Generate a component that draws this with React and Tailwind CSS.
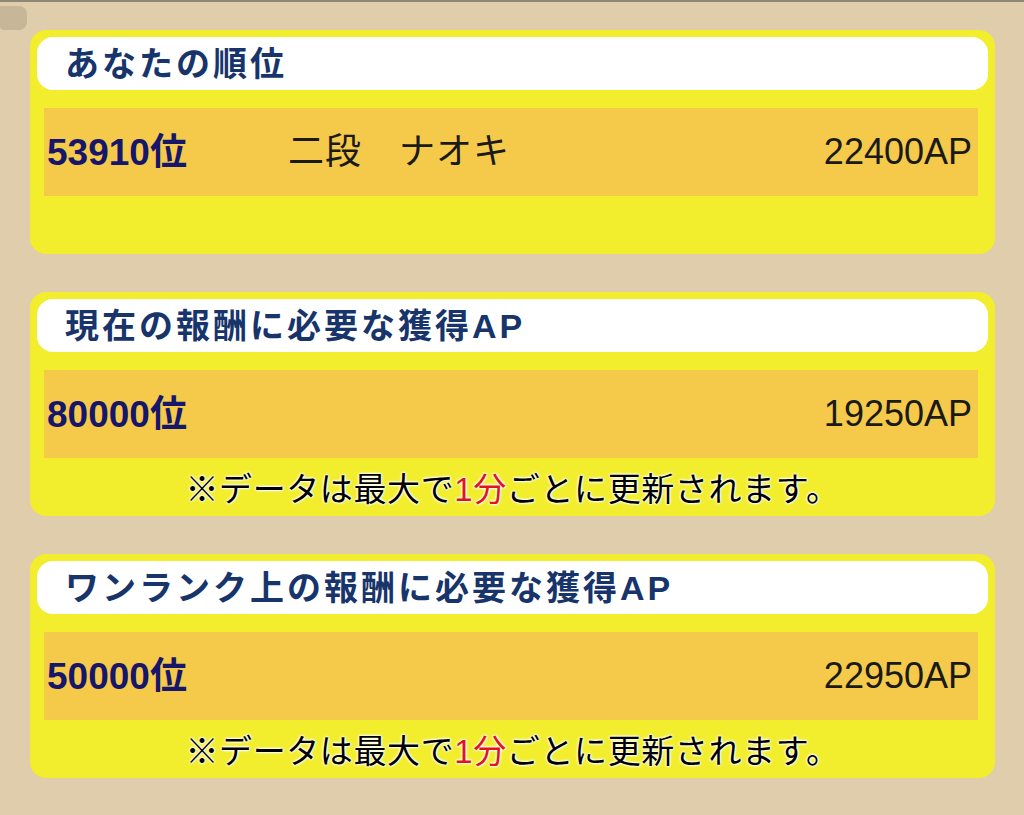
import React from "react";

const jp = "font-['Liberation_Sans','Noto_Sans_CJK_JP',sans-serif]";

const cards = [
  { title: "あなたの順位", rank: "53910位", name: "二段　ナオキ", ap: "22400AP", note: false },
  { title: "現在の報酬に必要な獲得AP", rank: "80000位", name: "", ap: "19250AP", note: true },
  { title: "ワンランク上の報酬に必要な獲得AP", rank: "50000位", name: "", ap: "22950AP", note: true },
];

function Note() {
  return (
    <p className="text-[33px] tracking-[0.6px] leading-none text-black text-center [text-shadow:0_0_2px_#fff,0_0_2px_#fff,0_0_3px_#fff,0_0_3px_#fff]">
      ※データは最大で<span className="text-[#e0141e]">1分</span>ごとに更新されます。
    </p>
  );
}

function RankCard({ card }) {
  return (
    <div className="bg-[#f2ee2d] rounded-[16px] pt-[7px] px-[7px] h-[224px] flex flex-col">
      {/* header */}
      <div className="bg-white rounded-[16px] h-[53px] flex items-center pl-[28px]">
        <h2 className="text-[34px] font-bold tracking-[3px] text-[#17346b] leading-none">
          {card.title}
        </h2>
      </div>

      {/* rank row */}
      <div className="mt-[18px] ml-[7px] mr-[10px] h-[88px] bg-[#f5c94a] flex items-center pl-[3px] pr-[6px]">
        <span className="text-[37px] font-bold text-[#16166a] leading-none w-[241px]">{card.rank}</span>
        <span className="text-[36px] text-[#1a1a1a] leading-none tracking-[1px]">{card.name}</span>
        <span className="ml-auto text-[36px] text-[#1a1a1a] leading-none">{card.ap}</span>
      </div>

      <div className="flex-1 flex items-center justify-center pt-[4px]">
        {card.note && <Note />}
      </div>
    </div>
  );
}

export default function App() {
  return (
    <div className={`w-[1024px] h-[815px] bg-[#dfcdab] relative overflow-hidden ${jp}`}>
      <div className="h-[2px] bg-[#8e8677]" />
      <div className="absolute left-0 top-[6px] w-[27px] h-[24px] bg-[#c7b698] rounded-r-[8px] rounded-bl-[4px]" />
      <div className="pl-[30px] pr-[29px] pt-[28px] flex flex-col gap-[38px]">
        {cards.map((card) => (
          <RankCard key={card.title} card={card} />
        ))}
      </div>
    </div>
  );
}
